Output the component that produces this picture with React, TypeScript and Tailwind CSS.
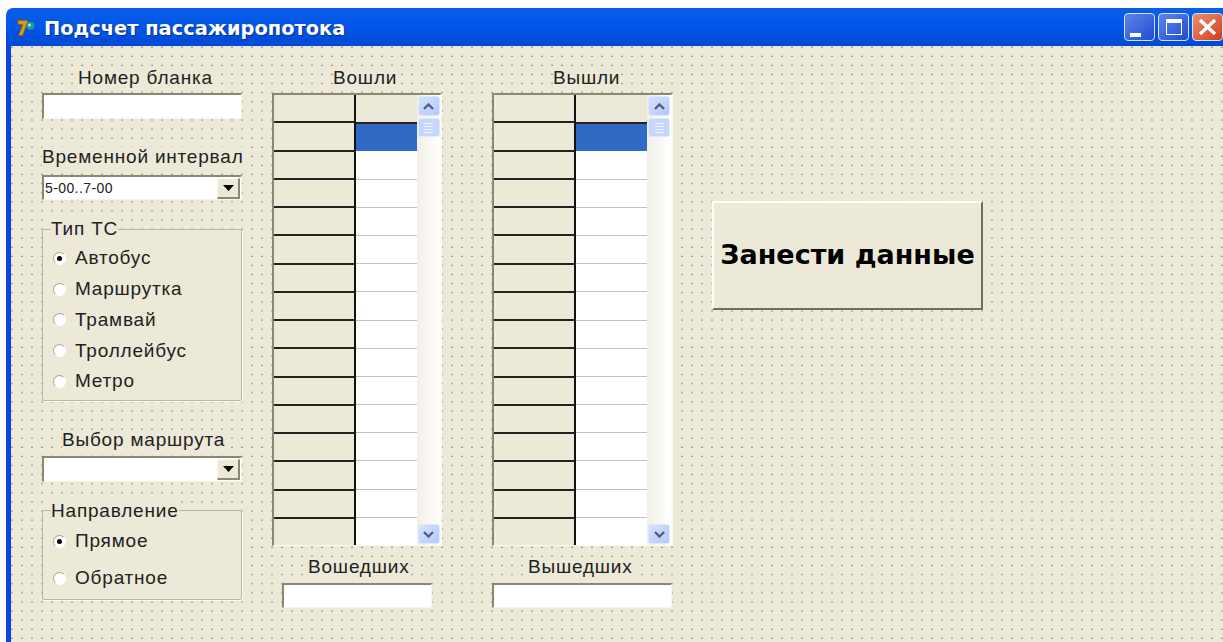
import { ReactNode } from 'react'

const vehicleTypes = [
  { label: 'Автобус', checked: true },
  { label: 'Маршрутка' },
  { label: 'Трамвай' },
  { label: 'Троллейбус' },
  { label: 'Метро' },
]

const directions = [
  { label: 'Прямое', checked: true },
  { label: 'Обратное' },
]

const ROW_COUNT = 16

function Caption({ children, className = '' }: { children: ReactNode; className?: string }) {
  return (
    <div className={`h-5 w-fit whitespace-nowrap bg-[#ece9d8] text-[19px] leading-5 tracking-[0.8px] text-[#222] ${className}`}>
      {children}
    </div>
  )
}

function TextBox({ className = '' }: { className?: string }) {
  return (
    <div className={`border-t-2 border-l-2 border-r border-b border-t-[#8a8776] border-l-[#8a8776] border-r-[#f7f5ec] border-b-[#f7f5ec] bg-white ${className}`} />
  )
}

function ComboBox({ value, className = '' }: { value?: string; className?: string }) {
  return (
    <div className={`flex items-center justify-between border-t-2 border-l-2 border-r border-b border-t-[#8a8776] border-l-[#8a8776] border-r-[#f7f5ec] border-b-[#f7f5ec] bg-white pr-[1px] pl-[1px] ${className}`}>
      <span className="text-[14px] leading-none tracking-[0.4px] text-[#222]">{value}</span>
      <span className="flex h-[21px] w-[23px] items-center justify-center border-t border-l border-r-2 border-b-2 border-t-[#fbfaf4] border-l-[#fbfaf4] border-r-[#8a8776] border-b-[#8a8776] bg-[#ece9d8]">
        <svg width="11" height="6" viewBox="0 0 11 6">
          <path d="M0 0h11L5.5 6z" fill="#000" />
        </svg>
      </span>
    </div>
  )
}

function Radio({ label, checked }: { label: string; checked?: boolean }) {
  return (
    <div className="flex h-full items-center gap-[9px] pl-[10px]">
      <span className="flex h-[13px] w-[13px] items-center justify-center rounded-full border border-[#a9a695] border-r-white border-b-white bg-white">
        {checked && <span className="h-[5px] w-[5px] rounded-full bg-black" />}
      </span>
      <span className="text-[19px] leading-5 tracking-[0.8px] text-[#222]">{label}</span>
    </div>
  )
}

function RadioGroup({ title, items, rowClass, className = '' }: {
  title: string
  items: { label: string; checked?: boolean }[]
  rowClass: string
  className?: string
}) {
  return (
    <fieldset className={`w-[200px] rounded-[2px] border border-[#b9b6a5] bg-[#ece9d8] shadow-[1px_1px_0_#fbfaf4] ${className}`}>
      <legend className="ml-[8px] h-5 bg-[#ece9d8] text-[19px] leading-5 tracking-[0.8px] text-[#222]">{title}</legend>
      {items.map((item) => (
        <div key={item.label} className={rowClass}>
          <Radio label={item.label} checked={item.checked} />
        </div>
      ))}
    </fieldset>
  )
}

function ScrollButton({ up }: { up?: boolean }) {
  return (
    <div className="flex h-[20px] w-[22px] items-center justify-center rounded-[3px] border border-[#dfe8fe] bg-gradient-to-br from-[#d6e2fd] to-[#b4c9fa]">
      <svg width="11" height="7" viewBox="0 0 11 7" className={up ? '' : 'rotate-180'}>
        <path d="M1 6l4.5-4.5L10 6" fill="none" stroke="#4d6185" strokeWidth="2.4" />
      </svg>
    </div>
  )
}

// string grid with a vertical scrollbar; second row of the data column is selected
function StringGrid({ dataWidth, barWidth }: { dataWidth: string; barWidth: string }) {
  return (
    <div className="mt-[5px] flex h-[453px] border-t-2 border-r-2 border-b border-l-2 border-t-[#8a8776] border-r-[#fbfaf4] border-b-[#fbfaf4] border-l-[#8a8776] bg-white">
      <div className="flex w-[82px] flex-col">
        {Array.from({ length: ROW_COUNT }, (_, i) => (
          <div key={i} className="flex-1 border-r-2 border-b-2 border-r-[#111] border-b-[#222] bg-[#ece9d8] last:border-b-0" />
        ))}
      </div>
      <div className={`flex flex-col ${dataWidth}`}>
        {Array.from({ length: ROW_COUNT }, (_, i) => (
          <div
            key={i}
            className={
              i === 0
                ? 'flex-1 border-b-2 border-b-[#222] bg-[#ece9d8]'
                : i === 1
                  ? 'flex-1 bg-[#316ac5]'
                  : 'flex-1 border-b border-b-[#c4c3bb] bg-white last:border-b-0'
            }
          />
        ))}
      </div>
      <div className={`flex flex-col items-center bg-gradient-to-r from-[#f1efe6] to-white pt-[1px] pb-[1px] ${barWidth}`}>
        <ScrollButton up />
        <div className="mt-[2px] flex h-[19px] w-[22px] flex-col items-center justify-center gap-[2px] rounded-[3px] border border-[#dfe8fe] bg-[#c5d5fc]">
          <span className="h-px w-[9px] bg-[#eef3ff]" />
          <span className="h-px w-[9px] bg-[#eef3ff]" />
          <span className="h-px w-[9px] bg-[#eef3ff]" />
          <span className="h-px w-[9px] bg-[#eef3ff]" />
        </div>
        <div className="flex-1" />
        <ScrollButton />
      </div>
    </div>
  )
}

function CaptionButton({ close, children }: { close?: boolean; children: ReactNode }) {
  return (
    <div className={`flex h-[28px] w-[31px] items-center justify-center rounded-[4px] border border-[#d6e2fb] ${close ? 'bg-gradient-to-br from-[#e78d72] to-[#d13c10]' : 'bg-gradient-to-br from-[#5f86ea] to-[#2049cf]'}`}>
      {children}
    </div>
  )
}

export default function App() {
  return (
    <div className="h-[642px] w-[1223px] overflow-hidden bg-white pt-2 pl-[6px] font-['Liberation_Sans',sans-serif]">
      <div className="flex h-[634px] flex-col overflow-hidden rounded-tl-[7px]">
        <div className="flex h-[38px] shrink-0 items-center justify-between bg-gradient-to-b from-[#0a5ee6] via-[#0256ea] to-[#0149d3] pl-[9px]">
          <div className="flex items-center gap-[7px] pt-[3px]">
            <svg width="22" height="22" viewBox="0 0 20 20">
              <path d="M2 3h10l-1 3-4 11H3l4-10H3z" fill="#d99a1c" stroke="#7a5208" strokeWidth="0.7" />
              <circle cx="14" cy="8" r="3.6" fill="#1e9c8c" />
              <circle cx="13.2" cy="7.2" r="1.4" fill="#b7e6dd" />
            </svg>
            <span className="font-['DejaVu_Sans',sans-serif] text-[19.4px] font-bold text-white [text-shadow:1px_1px_1px_#0a2a8a]">
              Подсчет пассажиропотока
            </span>
          </div>
          <div className="flex gap-[3px]">
            <CaptionButton>
              <span className="mt-[16px] mr-[9px] h-[4px] w-[11px] bg-white" />
            </CaptionButton>
            <CaptionButton>
              <span className="h-[16px] w-[16px] border border-t-[4px] border-white" />
            </CaptionButton>
            <CaptionButton close>
              <svg width="19" height="18" viewBox="0 0 19 18">
                <path d="M2 2l15 14M17 2L2 16" stroke="#fff" strokeWidth="3.4" />
              </svg>
            </CaptionButton>
          </div>
        </div>

        <div className="flex flex-1 border-l-[5px] border-l-[#0a44e0] bg-[#ece9d8] bg-[radial-gradient(circle_at_1px_1px,#66655a_0.5px,transparent_0.8px)] bg-[length:10px_9.1px] pl-[31px]">
          <div className="w-[200px]">
            <Caption className="mt-[22px] ml-[36px]">Номер бланка</Caption>
            <TextBox className="mt-[5px] h-[26px] w-[200px]" />
            <Caption className="mt-[28px]">Временной интервал</Caption>
            <ComboBox value="5-00..7-00" className="mt-[8px] h-[25px] w-[200px]" />
            <RadioGroup title="Тип ТС" items={vehicleTypes} rowClass="h-[30.75px]" className="mt-[19px] pt-[4px] pb-[3px]" />
            <Caption className="mt-[29px] ml-[20px]">Выбор маршрута</Caption>
            <ComboBox className="mt-[6px] h-[26px] w-[200px]" />
            <RadioGroup title="Направление" items={directions} rowClass="h-[37px]" className="mt-[19px] pt-[2px] pb-[2px]" />
          </div>

          <div className="ml-[30px] w-[170px]">
            <Caption className="mt-[22px] ml-[61px]">Вошли</Caption>
            <StringGrid dataWidth="w-[61px]" barWidth="w-[23px]" />
            <Caption className="mt-[11px] ml-[36px]">Вошедших</Caption>
            <TextBox className="mt-[6px] ml-[10px] h-[25px] w-[150px]" />
          </div>

          <div className="ml-[50px] w-[181px]">
            <Caption className="mt-[22px] ml-[61px]">Вышли</Caption>
            <StringGrid dataWidth="w-[71px]" barWidth="w-[24px]" />
            <Caption className="mt-[11px] ml-[36px]">Вышедших</Caption>
            <TextBox className="mt-[6px] h-[25px] w-[180px]" />
          </div>

          <button className="mt-[155px] ml-[39px] h-[109px] w-[271px] border-2 border-t-white border-r-[#6f6d60] border-b-[#6f6d60] border-l-white bg-[#ece9d8] font-['DejaVu_Sans',sans-serif] text-[27px] font-bold whitespace-nowrap text-black">
            Занести данные
          </button>
        </div>
      </div>
    </div>
  )
}
